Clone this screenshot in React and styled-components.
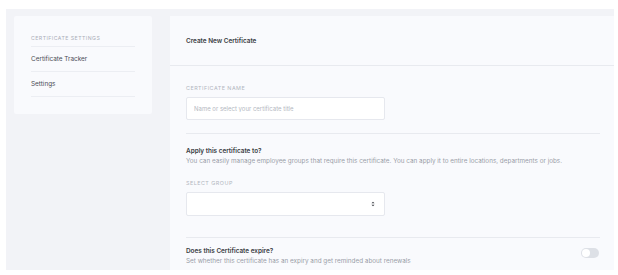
import React from "react";
import styled, { createGlobalStyle } from "styled-components";

const GlobalStyle = createGlobalStyle`
  html, body {
    margin: 0;
    padding: 0;
    background: #ffffff;
    font-family: Inter, "Noto Sans", sans-serif;
    -webkit-font-smoothing: antialiased;
  }
`;

const Page = styled.div`
  width: 618px;
  height: 275px;
  padding: 9px 4px 5px 6px;
  box-sizing: border-box;
`;

const Frame = styled.div`
  height: 100%;
  background: #f2f3f7;
  padding: 7px 0 0 8px;
  box-sizing: border-box;
  display: flex;
  gap: 18px;
  align-items: flex-start;
  overflow: hidden;
`;

const Sidebar = styled.nav`
  width: 138px;
  flex: none;
  background: #f9fafd;
  border-radius: 2px;
  padding: 18px 17px 17px;
  box-sizing: border-box;
`;

const SideHeading = styled.div`
  font-size: 5.2px;
  line-height: 8px;
  letter-spacing: 0.09em;
  text-transform: uppercase;
  color: #a9adb8;
  padding-bottom: 4px;
  border-bottom: 1px solid #eceef3;
`;

const SideItem = styled.div`
  font-size: 6.4px;
  line-height: 7px;
  color: #4a4d55;
  padding: 9px 0 8px;
  border-bottom: 1px solid #eceef3;
`;

const Main = styled.main`
  flex: 1;
  min-height: 100%;
  background: #f9fafd;
`;

const Header = styled.div`
  height: 49px;
  display: flex;
  align-items: center;
  padding: 0 16px;
  border-bottom: 1px solid #e8eaef;
  font-size: 6.4px;
  font-weight: 600;
  color: #3a3d44;
`;

const Body = styled.div`
  padding: 0 14px 0 16px;
`;

const Section = styled.section`
  padding: ${(p) => p.$top}px 0 ${(p) => p.$bottom}px;
  border-bottom: ${(p) => (p.$last ? "none" : "1px solid #e8eaef")};
  display: flex;
  align-items: flex-start;
  justify-content: space-between;
`;

const Stack = styled.div`
  display: flex;
  flex-direction: column;
`;

const Label = styled.label`
  font-size: 5.4px;
  line-height: 8px;
  letter-spacing: 0.09em;
  text-transform: uppercase;
  color: #b2b6c0;
  margin-top: ${(p) => p.$top || 0}px;
  margin-bottom: 5px;
`;

const Input = styled.input`
  width: 199px;
  height: 23px;
  box-sizing: border-box;
  border: 1px solid #e6e8ee;
  border-radius: 2px;
  background: #ffffff;
  padding: 0 7px;
  font-family: inherit;
  font-size: 6px;
  color: #3a3d44;
  outline: none;

  &::placeholder {
    color: #b4b8c1;
  }
`;

const Select = styled.div`
  width: 199px;
  height: 24px;
  box-sizing: border-box;
  border: 1px solid #e6e8ee;
  border-radius: 2px;
  background: #ffffff;
  display: flex;
  align-items: center;
  justify-content: flex-end;
  padding-right: 9px;
`;

const Title = styled.div`
  font-size: 6.4px;
  line-height: 9px;
  font-weight: 600;
  color: #3a3d44;
`;

const Desc = styled.div`
  font-size: 6.35px;
  line-height: 11px;
  color: #9a9ea8;
`;

const Toggle = styled.div`
  width: 18px;
  height: 10px;
  margin: 1px 1px 0 0;
  border-radius: 5px;
  background: #dde0e6;
  position: relative;

  &::after {
    content: "";
    position: absolute;
    left: 1px;
    top: 1px;
    width: 8px;
    height: 8px;
    border-radius: 50%;
    background: #ffffff;
  }
`;

const Chevrons = () => (
  <svg width="4" height="6" viewBox="0 0 4 6">
    <path d="M0.5 2.2 L2 0.7 L3.5 2.2 Z" fill="#3a3d44" />
    <path d="M0.5 3.8 L2 5.3 L3.5 3.8 Z" fill="#3a3d44" />
  </svg>
);

export default function App() {
  return (
    <>
      <GlobalStyle />
      <Page>
        <Frame>
          <Sidebar>
            <SideHeading>Certificate Settings</SideHeading>
            <SideItem>Certificate Tracker</SideItem>
            <SideItem>Settings</SideItem>
          </Sidebar>
          <Main>
            <Header>Create New Certificate</Header>
            <Body>
              <Section $top={18} $bottom={13}>
                <Stack>
                  <Label>Certificate Name</Label>
                  <Input placeholder="Name or select your certificate title" />
                </Stack>
              </Section>
              <Section $top={13} $bottom={21}>
                <Stack>
                  <Title>Apply this certificate to?</Title>
                  <Desc>
                    You can easily manage employee groups that require this certificate. You can
                    apply it to entire locations, departments or jobs.
                  </Desc>
                  <Label $top={12}>Select Group</Label>
                  <Select>
                    <Chevrons />
                  </Select>
                </Stack>
              </Section>
              <Section $top={9} $bottom={10} $last>
                <Stack>
                  <Title>Does this Certificate expire?</Title>
                  <Desc>Set whether this certificate has an expiry and get reminded about renewals</Desc>
                </Stack>
                <Toggle />
              </Section>
            </Body>
          </Main>
        </Frame>
      </Page>
    </>
  );
}
